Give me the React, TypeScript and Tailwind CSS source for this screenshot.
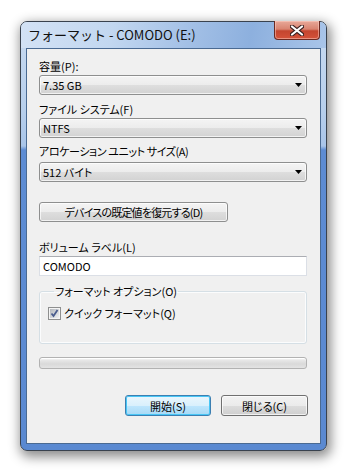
import React from 'react';

const font = "font-['Noto_Sans_CJK_JP','Noto_Sans',sans-serif] [font-feature-settings:'palt']";

const ArrowDown = () => (
  <svg width="7" height="4" viewBox="0 0 7 4">
    <path d="M0 0H7L3.5 4Z" fill="#000" />
  </svg>
);

const Combo = ({ value }: { value: string }) => (
  <div className="flex h-[20px] items-center justify-between rounded-[3px] border border-[#8e8f8f] bg-[linear-gradient(to_bottom,#f4f4f4_0%,#ececec_50%,#dedede_51%,#d2d2d2_100%)] pl-[3px] pr-[4px] shadow-[inset_0_0_0_1px_rgba(255,255,255,0.7)]">
    <span className="text-[11px] leading-[14px]">{value}</span>
    <ArrowDown />
  </div>
);

const Label = ({ text, className = '' }: { text: string; className?: string }) => (
  <div className={`text-[11px] leading-[14px] ${className}`}>{text}</div>
);

const CloseGlyph = () => (
  <svg width="14" height="11" viewBox="0 0 14 11">
    <path
      d="M2 1.5L12 9.5M12 1.5L2 9.5"
      stroke="#3a2020"
      strokeWidth="4.2"
      strokeLinecap="round"
    />
    <path
      d="M2 1.5L12 9.5M12 1.5L2 9.5"
      stroke="#fff"
      strokeWidth="2.2"
      strokeLinecap="round"
    />
  </svg>
);

const CheckBox = () => (
  <svg width="13" height="13" viewBox="0 0 13 13">
    <defs>
      <linearGradient id="cbg" x1="0" y1="0" x2="1" y2="1">
        <stop offset="0" stopColor="#b3b7bd" />
        <stop offset="1" stopColor="#eef0f2" />
      </linearGradient>
    </defs>
    <rect x="0.5" y="0.5" width="12" height="12" fill="#f4f4f4" stroke="#8e8f8f" />
    <rect x="2" y="2" width="9" height="9" fill="url(#cbg)" />
    <path d="M3.5 6.5L5.5 9L9.5 3" stroke="#4a5d8e" strokeWidth="1.8" fill="none" />
  </svg>
);

export default function App() {
  return (
    <div className={`h-[471px] w-[346px] overflow-hidden bg-white pl-[20px] pt-[21px] text-black ${font}`}>
      {/* window frame */}
      <div className="flex h-[430px] w-[307px] flex-col rounded-[7px] border border-[#39424e] bg-[linear-gradient(to_bottom,#c9dbf1_0px,#b7cfec_90px,#a9c5e9_124px,#5d8cd3_128px,#5a89d1_100%)] shadow-[2px_4px_12px_2px_rgba(0,0,0,0.45)]">
        {/* title bar */}
        <div className="flex h-[26px] items-start justify-between rounded-t-[6px] bg-[linear-gradient(100deg,#d3e2f5_0%,#c2d7f0_30%,#a3c0e6_55%,#8db0de_75%,#a9c5e9_100%)] pl-[7px] pr-[6px]">
          <span className="pt-[4px] text-[13px] leading-[17px] text-[#101010] [font-feature-settings:normal]">フォーマット - COMODO (E:)</span>
          <div className="-mt-px flex h-[19px] w-[46px] items-center justify-center rounded-b-[4px] border border-t-0 border-[#6b2a22] bg-[linear-gradient(to_bottom,#e8a899_0%,#d98471_45%,#c4452f_55%,#d4523a_100%)] shadow-[inset_0_0_0_1px_rgba(255,210,200,0.5)]">
            <CloseGlyph />
          </div>
        </div>

        {/* client area */}
        <div className="mx-[5px] mb-[6px] flex flex-1 flex-col border border-[#4a6a92] bg-[#f0f0f0] pl-[12px] pr-[13px]">
          <Label text="容量(P):" className="mt-[10px]" />
          <div className="mt-[2px]">
            <Combo value="7.35 GB" />
          </div>
          <Label text="ファイル システム(F)" className="mt-[7px]" />
          <div className="mt-[2px]">
            <Combo value="NTFS" />
          </div>
          <Label text="アロケーション ユニット サイズ(A)" className="mt-[6px] tracking-[-0.4px]" />
          <div className="mt-[4px]">
            <Combo value="512 バイト" />
          </div>

          <div className="mt-[20px] flex h-[20px] w-[189px] items-center justify-center rounded-[3px] border border-[#8e8f8f] bg-[linear-gradient(to_bottom,#f4f4f4_0%,#ececec_50%,#dedede_51%,#d2d2d2_100%)] shadow-[inset_0_0_0_1px_rgba(255,255,255,0.7)]">
            <span className="text-[11px] leading-[14px] tracking-[-0.8px]">デバイスの既定値を復元する(D)</span>
          </div>

          <Label text="ボリューム ラベル(L)" className="mt-[18px]" />
          <div className="mt-[2px] flex h-[20px] items-center border border-[#dbdfe6] border-t-[#abadb3] bg-white pl-[3px]">
            <span className="text-[11px] leading-[14px]">COMODO</span>
          </div>

          <fieldset className="mt-[8px] h-[60px] rounded-[3px] border border-[#d5dfe5] pl-[8px] shadow-[inset_0_0_0_1px_#fbfcfd]">
            <legend className="ml-[6px] px-[1px] text-[11px] leading-[14px]">フォーマット オプション(O)</legend>
            <div className="mt-[8px] flex items-center gap-[3px]">
              <CheckBox />
              <span className="text-[11px] leading-[14px]">クイック フォーマット(Q)</span>
            </div>
          </fieldset>

          <div className="mt-[13px] h-[12px] rounded-[3px] border border-[#b2b2b2] bg-[linear-gradient(to_bottom,#fafafa_0%,#e6e6e6_25%,#d9d9d9_60%,#e3e3e3_100%)] shadow-[inset_0_1px_0_#ffffff]" />

          <div className="mt-[26px] mr-[-1px] flex justify-end gap-[10px]">
            <div className="flex h-[21px] w-[86px] items-center justify-center rounded-[3px] border border-[#3c7fb1] bg-[linear-gradient(to_bottom,#eaf6fd_0%,#d9f0fc_50%,#bee6fd_51%,#a7d9f5_100%)] shadow-[inset_0_0_0_1px_#48c6f5]">
              <span className="text-[11px] leading-[14px]">開始(S)</span>
            </div>
            <div className="flex h-[21px] w-[87px] items-center justify-center rounded-[3px] border border-[#707070] bg-[linear-gradient(to_bottom,#f2f2f2_0%,#ebebeb_50%,#dddddd_51%,#cfcfcf_100%)] shadow-[inset_0_0_0_1px_rgba(255,255,255,0.7)]">
              <span className="text-[11px] leading-[14px]">閉じる(C)</span>
            </div>
          </div>
        </div>
      </div>
    </div>
  );
}
